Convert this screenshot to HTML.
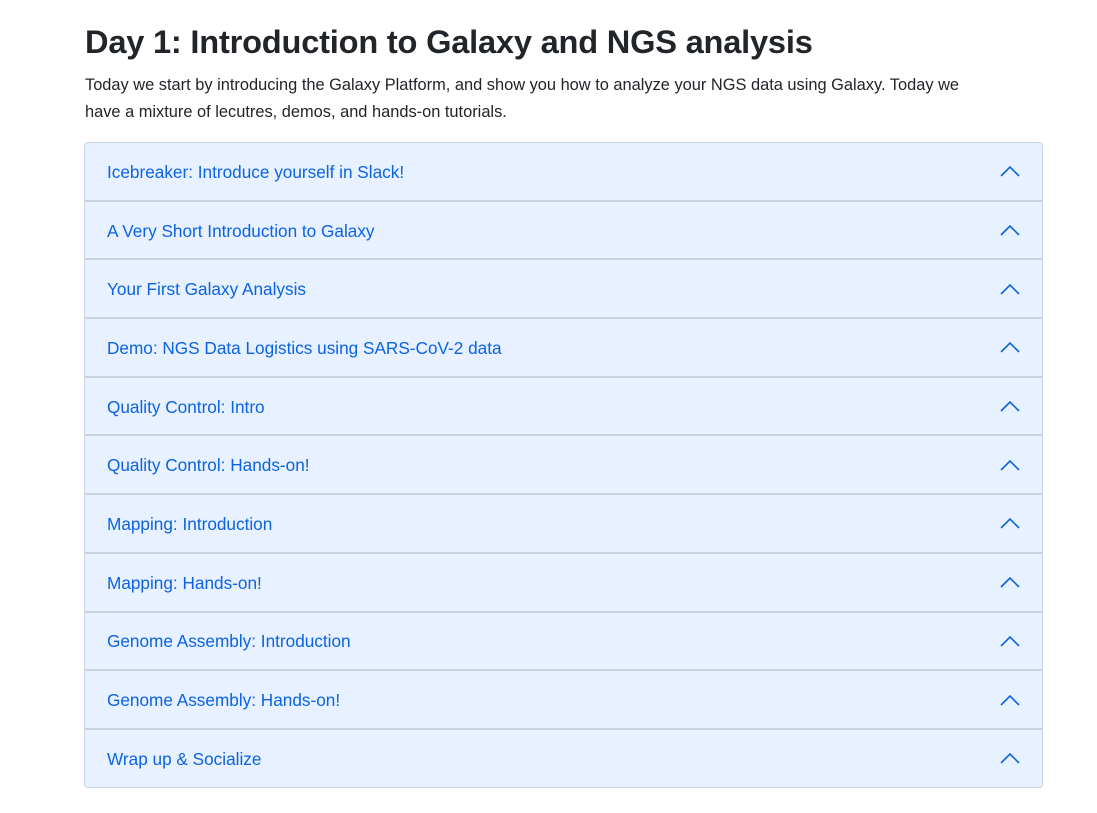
<!DOCTYPE html>
<html><head><style>
body{margin:0;background:#fff;font-family:"Liberation Sans",sans-serif;color:#212529}
.wrap{position:absolute;left:85px;top:0;width:959px}
h1{margin:0;position:absolute;top:23px;left:0;font-size:32.6px;font-weight:bold;letter-spacing:-0.2px;white-space:nowrap}
p{margin:0;position:absolute;top:72px;left:0;font-size:16.4px;line-height:27px;width:900px}
.acc{position:absolute;top:142px;left:-1px;width:957px;border:1px solid #c9d2de;border-radius:4px;overflow:hidden;border-bottom:1px solid #c9d2de}
.item{box-sizing:border-box;height:58.7px;background:#e7f1ff;border-bottom:2px solid #c9d2de;display:flex;align-items:center;padding:2px 22px 0;color:#0c63e4;font-size:17.2px;position:relative}
.item:last-child{border-bottom:0;height:56.7px}
.item svg{position:absolute;right:22px;top:50%;margin-top:-6px}
</style></head><body><div class="wrap">
<h1>Day 1: Introduction to Galaxy and NGS analysis</h1>
<p>Today we start by introducing the Galaxy Platform, and show you how to analyze your NGS data using Galaxy. Today we have a mixture of lecutres, demos, and hands-on tutorials.</p>
<div class="acc">
<div class="item">Icebreaker: Introduce yourself in Slack!<svg width="20" height="12" viewBox="0 0 20 12"><path d="M1 11L10 2L19 11" fill="none" stroke="#0c63e4" stroke-width="1.6"/></svg></div>
<div class="item">A Very Short Introduction to Galaxy<svg width="20" height="12" viewBox="0 0 20 12"><path d="M1 11L10 2L19 11" fill="none" stroke="#0c63e4" stroke-width="1.6"/></svg></div>
<div class="item">Your First Galaxy Analysis<svg width="20" height="12" viewBox="0 0 20 12"><path d="M1 11L10 2L19 11" fill="none" stroke="#0c63e4" stroke-width="1.6"/></svg></div>
<div class="item">Demo: NGS Data Logistics using SARS-CoV-2 data<svg width="20" height="12" viewBox="0 0 20 12"><path d="M1 11L10 2L19 11" fill="none" stroke="#0c63e4" stroke-width="1.6"/></svg></div>
<div class="item">Quality Control: Intro<svg width="20" height="12" viewBox="0 0 20 12"><path d="M1 11L10 2L19 11" fill="none" stroke="#0c63e4" stroke-width="1.6"/></svg></div>
<div class="item">Quality Control: Hands-on!<svg width="20" height="12" viewBox="0 0 20 12"><path d="M1 11L10 2L19 11" fill="none" stroke="#0c63e4" stroke-width="1.6"/></svg></div>
<div class="item">Mapping: Introduction<svg width="20" height="12" viewBox="0 0 20 12"><path d="M1 11L10 2L19 11" fill="none" stroke="#0c63e4" stroke-width="1.6"/></svg></div>
<div class="item">Mapping: Hands-on!<svg width="20" height="12" viewBox="0 0 20 12"><path d="M1 11L10 2L19 11" fill="none" stroke="#0c63e4" stroke-width="1.6"/></svg></div>
<div class="item">Genome Assembly: Introduction<svg width="20" height="12" viewBox="0 0 20 12"><path d="M1 11L10 2L19 11" fill="none" stroke="#0c63e4" stroke-width="1.6"/></svg></div>
<div class="item">Genome Assembly: Hands-on!<svg width="20" height="12" viewBox="0 0 20 12"><path d="M1 11L10 2L19 11" fill="none" stroke="#0c63e4" stroke-width="1.6"/></svg></div>
<div class="item">Wrap up &amp; Socialize<svg width="20" height="12" viewBox="0 0 20 12"><path d="M1 11L10 2L19 11" fill="none" stroke="#0c63e4" stroke-width="1.6"/></svg></div>
</div></div></body></html>
